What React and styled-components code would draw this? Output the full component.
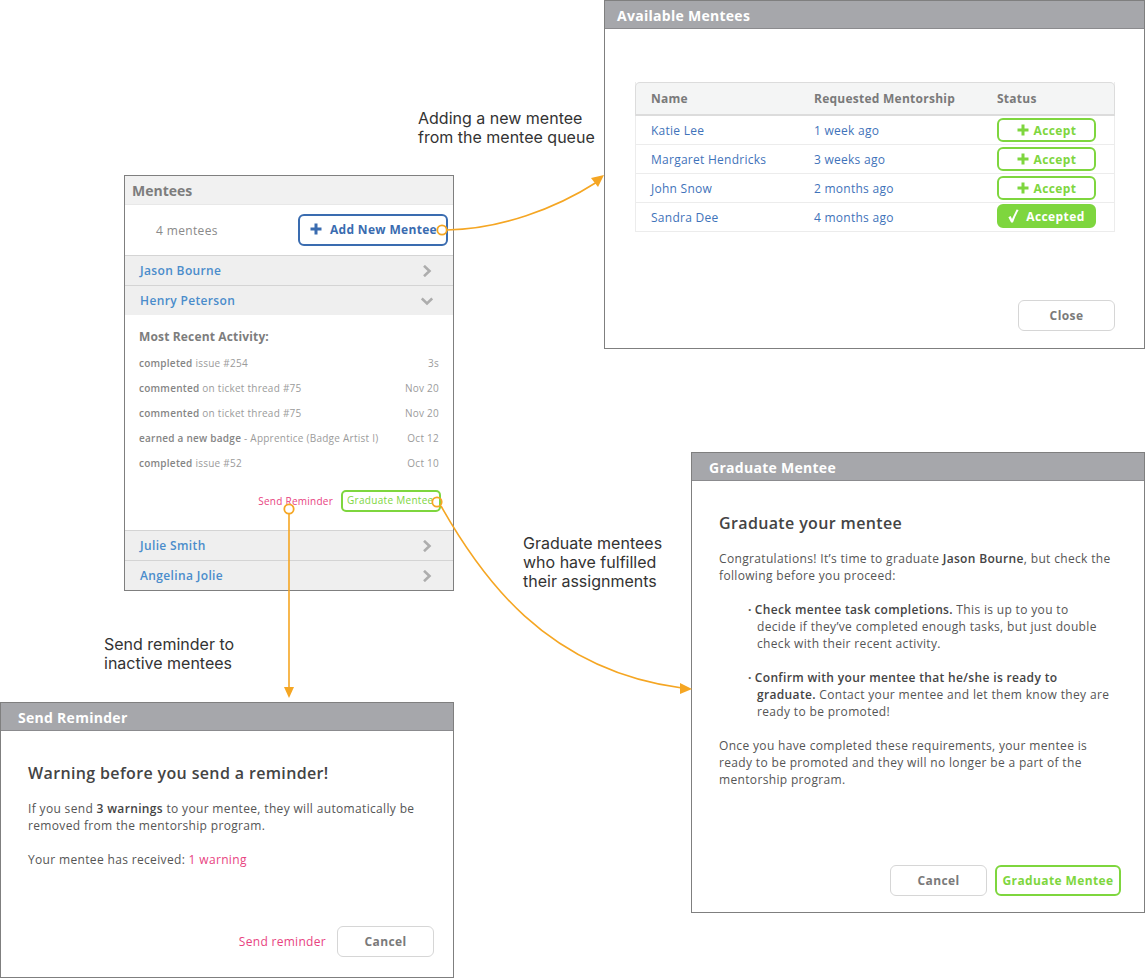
import React from 'react'
import styled, {createGlobalStyle} from 'styled-components'

const GlobalStyle = createGlobalStyle`
  html, body {
    margin: 0;
    padding: 0;
    background: #fff;
  }
  body {
    font-family: "Open Sans", "Liberation Sans", sans-serif;
  }
`

const Canvas = styled.div`
  position: relative;
  width: 1147px;
  height: 978px;
  overflow: hidden;
  background: #fff;
`

const Panel = styled.section`
  position: absolute;
  left: ${p => p.$x}px;
  top: ${p => p.$y}px;
  width: ${p => p.$w}px;
  height: ${p => p.$h}px;
  box-sizing: border-box;
  border: 1px solid #7f7f7f;
  background: #fff;
  display: flex;
  flex-direction: column;
`

const WindowBar = styled.header`
  flex: none;
  height: 28px;
  box-sizing: border-box;
  padding-left: ${p => p.$pad || 17}px;
  background: #a6a7ab;
  border-bottom: 1px solid #8b8b8e;
  color: #fff;
  font-size: 14px;
  font-weight: 700;
  letter-spacing: 0.28px;
  line-height: 29px;
`

const Note = styled.p`
  position: absolute;
  left: ${p => p.$x}px;
  top: ${p => p.$y}px;
  margin: 0;
  font-family: Inter, "Liberation Sans", sans-serif;
  font-size: 16px;
  line-height: 19px;
  color: #333;
  white-space: nowrap;
`

const Arrows = styled.svg`
  position: absolute;
  left: 0;
  top: 0;
  width: 1147px;
  height: 978px;
  pointer-events: none;
`

/* mentees panel */

const ListBar = styled.header`
  height: 29px;
  box-sizing: border-box;
  padding-left: 7px;
  background: #f1f1f1;
  border-bottom: 1px solid #e8e8e8;
  color: #7d7d7d;
  font-size: 14px;
  font-weight: 700;
  line-height: 29px;
`

const CountRow = styled.div`
  height: 50px;
  box-sizing: border-box;
  padding: 9px 5px 0 31px;
  display: flex;
  justify-content: space-between;
  align-items: flex-start;
`

const Count = styled.span`
  margin-top: 9px;
  font-size: 12px;
  letter-spacing: 0.35px;
  line-height: 16px;
  color: #8a8a8a;
`

const AddButton = styled.button`
  width: 150px;
  height: 32px;
  box-sizing: border-box;
  padding: 0 0 2px 10px;
  display: flex;
  align-items: center;
  gap: 8px;
  background: #fff;
  border: 2px solid #3a6cb0;
  border-radius: 6px;
  color: #3a6cb0;
  font-family: inherit;
  font-size: 12px;
  font-weight: 700;
  letter-spacing: 0.32px;
`

const PersonRow = styled.div`
  height: 30px;
  box-sizing: border-box;
  padding: 0 20px 0 15px;
  display: flex;
  justify-content: space-between;
  align-items: center;
  background: #efefef;
  border-top: 1px solid #d4d4d4;
  color: #4a8ccb;
  font-size: 12px;
  font-weight: 600;
  letter-spacing: 0.36px;
`

const ActivityBlock = styled.div`
  height: 215px;
  box-sizing: border-box;
  padding: 14px 14px 0;
`

const ActivityTitle = styled.h3`
  margin: 0 0 5px;
  color: #7d7d7d;
  font-size: 12px;
  font-weight: 700;
  letter-spacing: 0.15px;
  line-height: 16px;
`

const ActivityRow = styled.div`
  height: 25.2px;
  display: flex;
  justify-content: space-between;
  align-items: center;
  color: #9b9b9b;
  font-size: 10px;
  letter-spacing: 0.25px;
  b {
    font-weight: 600;
    color: #858585;
  }
`

const ActivityActions = styled.div`
  margin-top: 14px;
  margin-right: -2px;
  display: flex;
  justify-content: flex-end;
  align-items: center;
  gap: 8px;
`

const ReminderLink = styled.span`
  color: #e8437f;
  font-size: 10px;
  letter-spacing: 0.25px;
`

const SmallGraduate = styled.span`
  width: 100px;
  height: 22px;
  box-sizing: border-box;
  padding-left: 4px;
  border: 2px solid #7ed63e;
  border-radius: 5px;
  color: #7ed63e;
  font-size: 10px;
  letter-spacing: 0.3px;
  line-height: 17px;
  white-space: nowrap;
`

/* available mentees */

const TableCard = styled.div`
  margin: 53px 29px 0 30px;
  border: 1px solid #ececec;
  border-top: 0;
`

const TableHead = styled.div`
  display: grid;
  grid-template-columns: 163px 183px 1fr;
  height: 34px;
  box-sizing: border-box;
  margin: 0 -1px;
  padding-left: 15px;
  align-items: center;
  background: #f4f5f5;
  border: 1px solid #dcdcdc;
  border-bottom-width: 2px;
  border-radius: 5px 5px 0 0;
  color: #7a7a7a;
  font-size: 12px;
  font-weight: 700;
  letter-spacing: 0.25px;
`

const TableRow = styled.div`
  display: grid;
  grid-template-columns: 163px 183px 1fr;
  height: 29px;
  box-sizing: border-box;
  padding-left: 15px;
  align-items: center;
  border-bottom: 1px solid #ececec;
  color: #3f73ba;
  font-size: 12px;
  letter-spacing: 0.26px;
  &:last-child {
    height: 28px;
    border-bottom: 0;
  }
`

const StatusButton = styled.span`
  width: 99px;
  height: 24px;
  box-sizing: border-box;
  margin-top: ${p => p.$done ? -2 : 0}px;
  display: flex;
  align-items: center;
  justify-content: center;
  gap: ${p => p.$done ? 7 : 5}px;
  border: 2px solid #7ed63e;
  border-radius: 6px;
  background: ${p => p.$done ? '#7ed63e' : '#fff'};
  color: ${p => p.$done ? '#fff' : '#7ed63e'};
  font-size: 12px;
  font-weight: 700;
  letter-spacing: 0.4px;
`

const PanelFooter = styled.div`
  margin-top: auto;
  padding: 0 ${p => p.$right}px ${p => p.$bottom}px 0;
  display: flex;
  justify-content: flex-end;
  align-items: center;
  gap: ${p => p.$gap || 0}px;
`

const GhostButton = styled.button`
  width: 97px;
  height: 31px;
  padding: 0;
  background: #fff;
  border: 1px solid #d6d6d6;
  border-radius: 6px;
  color: #7a7a7a;
  font-family: inherit;
  font-size: 12px;
  font-weight: 700;
  letter-spacing: 0.4px;
`

const GraduateButton = styled.button`
  width: 126px;
  height: 31px;
  padding: 0;
  background: #fff;
  border: 2px solid #7ed63e;
  border-radius: 6px;
  color: #7ed63e;
  font-family: inherit;
  font-size: 12px;
  font-weight: 700;
  letter-spacing: 0.38px;
`

const ReminderAction = styled.span`
  color: #e8437f;
  font-size: 12px;
  letter-spacing: 0.3px;
`

/* dialog copy */

const DialogBody = styled.div`
  padding: ${p => p.$top}px 0 0 ${p => p.$left}px;
  color: #555;
  font-size: 12px;
  letter-spacing: 0.34px;
  line-height: 17px;
  b {
    font-weight: 600;
    color: #444;
  }
`

const DialogTitle = styled.h2`
  margin: 0 0 16px;
  color: #444;
  font-size: 16px;
  font-weight: 600;
  letter-spacing: 0.36px;
  line-height: 22px;
`

const Copy = styled.p`
  margin: 0 0 17px;
  white-space: nowrap;
`

const Bullets = styled.ul`
  list-style: none;
  margin: 0 0 17px 38px;
  padding: 0;
  white-space: nowrap;
`

const Bullet = styled.li`
  margin-bottom: 17px;
  &:last-child {
    margin-bottom: 0;
  }
  &::before {
    content: "·";
    font-weight: 700;
    margin-right: 3px;
    margin-left: -9px;
  }
`

const Warning = styled.span`
  color: #e8437f;
  font-weight: 500;
`

const Plus = ({size = 12, color = 'currentColor', weight = 3}) => (
  <svg width={size} height={size} viewBox="0 0 12 12">
    <path d="M6 0.5V11.5M0.5 6H11.5" stroke={color} strokeWidth={weight} fill="none"/>
  </svg>
)

const Check = () => (
  <svg width="11" height="14" viewBox="0 0 11 14">
    <path d="M0.4 8.2L2.6 6.9L4 10L8.6 0.4L10.6 1C8.4 5 6.4 9.3 5 13.6L3.1 13.6Z" fill="#fff"/>
  </svg>
)

const Chevron = ({open}) => (
  <svg width="12" height="12" viewBox="0 0 12 12">
    <path
      d={open ? 'M0.8 3.5L6 8.5L11.2 3.5' : 'M3 0.8L8.5 6L3 11.2'}
      stroke="#adadad"
      strokeWidth="2.6"
      fill="none"/>
  </svg>
)

const Person = ({name, open}) => (
  <PersonRow>
    {name}
    <Chevron open={open}/>
  </PersonRow>
)

const activity = [
  {strong: 'completed', rest: ' issue #254', when: '3s'},
  {strong: 'commented', rest: ' on ticket thread #75', when: 'Nov 20'},
  {strong: 'commented', rest: ' on ticket thread #75', when: 'Nov 20'},
  {strong: 'earned a new badge', rest: ' - Apprentice (Badge Artist I)', when: 'Oct 12'},
  {strong: 'completed', rest: ' issue #52', when: 'Oct 10'}
]

const queue = [
  {name: 'Katie Lee', when: '1 week ago'},
  {name: 'Margaret Hendricks', when: '3 weeks ago'},
  {name: 'John Snow', when: '2 months ago'},
  {name: 'Sandra Dee', when: '4 months ago', done: true}
]

const ORANGE = '#f5a623'

const App = () => (
  <Canvas>
    <GlobalStyle/>

    <Panel $x={124} $y={175} $w={330} $h={416}>
      <ListBar>Mentees</ListBar>
      <CountRow>
        <Count>4 mentees</Count>
        <AddButton><Plus size={12}/>Add New Mentee</AddButton>
      </CountRow>
      <Person name="Jason Bourne"/>
      <Person name="Henry Peterson" open/>
      <ActivityBlock>
        <ActivityTitle>Most Recent Activity:</ActivityTitle>
        {activity.map((row, i) => (
          <ActivityRow key={i}>
            <span><b>{row.strong}</b>{row.rest}</span>
            <span>{row.when}</span>
          </ActivityRow>
        ))}
        <ActivityActions>
          <ReminderLink>Send Reminder</ReminderLink>
          <SmallGraduate>Graduate Mentee</SmallGraduate>
        </ActivityActions>
      </ActivityBlock>
      <Person name="Julie Smith"/>
      <Person name="Angelina Jolie"/>
    </Panel>

    <Panel $x={604} $y={0} $w={541} $h={349}>
      <WindowBar $pad={12}>Available Mentees</WindowBar>
      <TableCard>
        <TableHead>
          <span>Name</span>
          <span>Requested Mentorship</span>
          <span>Status</span>
        </TableHead>
        {queue.map(row => (
          <TableRow key={row.name}>
            <span>{row.name}</span>
            <span>{row.when}</span>
            {row.done
              ? <StatusButton $done><Check/>Accepted</StatusButton>
              : <StatusButton><Plus size={12}/>Accept</StatusButton>}
          </TableRow>
        ))}
      </TableCard>
      <PanelFooter $right={29} $bottom={17}>
        <GhostButton>Close</GhostButton>
      </PanelFooter>
    </Panel>

    <Panel $x={0} $y={702} $w={454} $h={276}>
      <WindowBar>Send Reminder</WindowBar>
      <DialogBody $top={31} $left={27}>
        <DialogTitle>Warning before you send a reminder!</DialogTitle>
        <Copy>
          If you send <b>3 warnings</b> to your mentee, they will automatically be<br/>
          removed from the mentorship program.
        </Copy>
        <Copy>Your mentee has received: <Warning>1 warning</Warning></Copy>
      </DialogBody>
      <PanelFooter $right={19} $bottom={20} $gap={11}>
        <ReminderAction>Send reminder</ReminderAction>
        <GhostButton>Cancel</GhostButton>
      </PanelFooter>
    </Panel>

    <Panel $x={691} $y={452} $w={454} $h={461}>
      <WindowBar>Graduate Mentee</WindowBar>
      <DialogBody $top={31} $left={27}>
        <DialogTitle>Graduate your mentee</DialogTitle>
        <Copy>
          Congratulations! It’s time to graduate <b>Jason Bourne</b>, but check the<br/>
          following before you proceed:
        </Copy>
        <Bullets>
          <Bullet>
            <b>Check mentee task completions.</b> This is up to you to<br/>
            decide if they’ve completed enough tasks, but just double<br/>
            check with their recent activity.
          </Bullet>
          <Bullet>
            <b>Confirm with your mentee that he/she is ready to<br/>
            graduate.</b> Contact your mentee and let them know they are<br/>
            ready to be promoted!
          </Bullet>
        </Bullets>
        <Copy>
          Once you have completed these requirements, your mentee is<br/>
          ready to be promoted and they will no longer be a part of the<br/>
          mentorship program.
        </Copy>
      </DialogBody>
      <PanelFooter $right={23} $bottom={16} $gap={8}>
        <GhostButton>Cancel</GhostButton>
        <GraduateButton>Graduate Mentee</GraduateButton>
      </PanelFooter>
    </Panel>

    <Note $x={418} $y={109}>Adding a new mentee<br/>from the mentee queue</Note>
    <Note $x={523} $y={534}>Graduate mentees<br/>who have fulfilled<br/>their assignments</Note>
    <Note $x={104} $y={635}>Send reminder to<br/>inactive mentees</Note>

    <Arrows viewBox="0 0 1147 978">
      <g fill="none" stroke={ORANGE} strokeWidth="1.6">
        <path d="M447 230 C 500 229, 555 209, 597 182"/>
        <circle cx="442" cy="230" r="4.7" strokeWidth="1.8"/>
        <path d="M289 514 V690"/>
        <circle cx="289" cy="509" r="4.7" strokeWidth="1.8"/>
        <path d="M441 506 C 480 575, 545 670, 682 688"/>
        <circle cx="437" cy="502" r="4.7" strokeWidth="1.8"/>
      </g>
      <g fill={ORANGE}>
        <path d="M604 175 L591 178 L598 187 Z"/>
        <path d="M289 698 L284 687 L294 687 Z"/>
        <path d="M692 689 L680 683 L680 694 Z"/>
      </g>
    </Arrows>
  </Canvas>
)

export default App
